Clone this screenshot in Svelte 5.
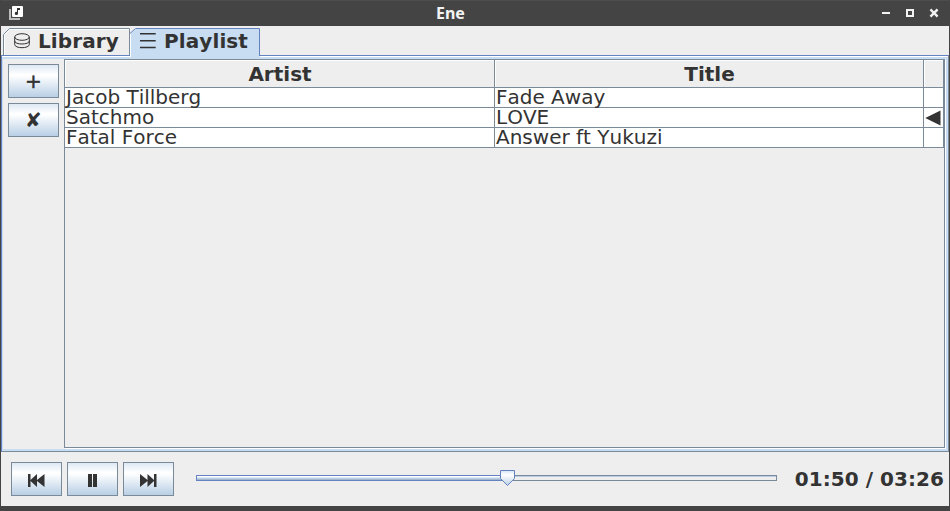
<script>
  const songs = [
    { artist: 'Jacob Tillberg', title: 'Fade Away' },
    { artist: 'Satchmo', title: 'LOVE' },
    { artist: 'Fatal Force', title: 'Answer ft Yukuzi' }
  ];
  let current = $state(1);
</script>

<div class="window">
  <header class="titlebar">
    <svg class="app-icon" width="14" height="14" viewBox="0 0 14 14">
      <path d="M1 3V13H11" fill="none" stroke="#bdbdbd" stroke-width="2" />
      <rect x="3" y="0" width="11" height="11" rx="1" fill="#fff" />
      <path d="M8 2H11V4H9V7.5A1.6 1.6 0 1 1 8 6Z" fill="#333" />
    </svg>
    <span class="name">Ene</span>
    <svg class="controls" width="57" height="10" viewBox="0 0 57 10">
      <path d="M0 4H8V6H0Z" fill="#f2f2f2" />
      <rect x="25" y="2" width="6" height="6" fill="none" stroke="#f2f2f2" stroke-width="2" />
      <path d="M49.3 2.3L54.7 7.7M54.7 2.3L49.3 7.7" stroke="#f2f2f2" stroke-width="2.4" stroke-linecap="square" />
    </svg>
  </header>

  <nav class="tabs">
    <div class="tab library">
      <svg class="shape" width="127" height="27" viewBox="0 0 127 27">
        <path d="M.5 27V6.5L6.5 .5H126.5V27" fill="#eee" stroke="#7a8a99" />
        <path d="M1.5 27V7L7 1.5H126" fill="none" stroke="#fff" />
      </svg>
      <svg class="icon" width="17" height="16" viewBox="0 0 17 16">
        <g fill="none" stroke="#333" stroke-width="1">
          <ellipse cx="8" cy="4" rx="7.3" ry="3.3" />
          <path d="M.7 4V11.4C.7 15.8 15.3 15.8 15.3 11.4V4M.7 8C.7 12 15.3 12 15.3 8" />
        </g>
      </svg>
      <span>Library</span>
    </div>
    <div class="tab playlist">
      <svg class="shape" width="130" height="30" viewBox="0 0 130 30">
        <path d="M1 30V5.5L5.5 .5H130V30" fill="#c8ddf2" />
        <path d="M0 5.5L5.5 .5H129.5V28" fill="none" stroke="#6382bf" />
        <path d="M.5 6V28" stroke="#fff" />
      </svg>
      <svg class="icon" width="16" height="16" viewBox="0 0 16 16">
        <path d="M0 .8H15.7M0 7.7H15.7M0 14.6H15.7" stroke="#333" stroke-width="1.5" />
      </svg>
      <span>Playlist</span>
    </div>
  </nav>

  <main class="panel">
    <aside>
      <button class="plus" aria-label="Add">+</button>
      <button aria-label="Remove">✘</button>
    </aside>
    <section class="list">
      <div class="row head">
        <div>Artist</div><div>Title</div><div></div>
      </div>
      {#each songs as song, i}
        <div class="row">
          <div>{song.artist}</div>
          <div>{song.title}</div>
          <div class="mark">
            {#if i === current}
              <svg width="16" height="17" viewBox="0 0 16 17"><path d="M.3 9L15.5 1.5V16.5Z" fill="#333" /></svg>
            {/if}
          </div>
        </div>
      {/each}
    </section>
  </main>

  <footer>
    <button aria-label="Previous">
      <svg width="17" height="16" viewBox="0 -3 17 16"><path d="M0 0H2.5V6L9 0V6L16.5 0V13L9 7V13L2.5 7V13H0Z" fill="#333" /></svg>
    </button>
    <button aria-label="Pause">
      <svg width="9" height="16" viewBox="0 -3 9 16"><path d="M0 0H4V13H0ZM5 0H9V13H5Z" fill="#333" /></svg>
    </button>
    <button aria-label="Next">
      <svg width="17" height="16" viewBox="0 -3 17 16"><path d="M0 0L7.5 6V0L14 6V0H16.5V13H14V7L7.5 13V7L0 13Z" fill="#333" /></svg>
    </button>
    <svg class="slider" width="581" height="18" viewBox="0 0 581 18">
      <defs>
        <linearGradient id="thumb" x1="0" y1="0" x2="0" y2="1">
          <stop offset="0" stop-color="#d5e4f2" />
          <stop offset=".3" stop-color="#fff" />
          <stop offset="1" stop-color="#b8cfe5" />
        </linearGradient>
      </defs>
      <rect x=".5" y="5.5" width="580" height="5" fill="#eee" stroke="#7a8a99" />
      <path d="M311 6.5H580" stroke="#b8cfe5" />
      <rect x=".5" y="5.5" width="311" height="5" fill="#b8cfe5" stroke="#6382bf" />
      <path d="M1 6.5H311" stroke="#fff" />
      <path d="M1 7.5H311" stroke="#dce9f5" />
      <path d="M1 9.5H311" stroke="#a3b8cc" />
      <path d="M304.5 .5H318.5V8.5L311.5 15.5L304.5 8.5Z" fill="url(#thumb)" stroke="#6382bf" />
    </svg>
    <span class="time">01:50 / 03:26</span>
  </footer>
</div>

<style>
  :global(body) { margin: 0; }
  .window {
    width: 950px;
    height: 511px;
    box-sizing: border-box;
    border: solid #444;
    border-width: 0 1px 5px;
    background: #eee;
    color: #333;
    font: 20px/20px "DejaVu Sans", sans-serif;
    font-kerning: none;
    font-variant-ligatures: none;
    display: flex;
    flex-direction: column;
    overflow: hidden;
  }
  .titlebar {
    height: 26px;
    margin: 0 -1px;
    box-sizing: border-box;
    flex: none;
    display: grid;
    grid-template-columns: 427px auto 1fr;
    align-items: center;
    padding: 0 11px 1px 9px;
    background: #444;
    border-top: 1px solid #4d4d4d;
    color: #f2f2f2;
  }
  .name { font: bold 16px/22px "Noto Sans", sans-serif; }
  .controls { justify-self: end; }
  .tabs {
    height: 29px;
    flex: none;
    display: flex;
    padding: 2px 0 0 2px;
    box-sizing: border-box;
  }
  .tab {
    position: relative;
    display: flex;
    align-items: center;
    height: 26px;
    box-sizing: border-box;
    font-weight: bold;
    letter-spacing: .1px;
    z-index: 1;
  }
  .tab .shape { position: absolute; left: 0; top: 0; z-index: -1; }
  .library { width: 127px; padding-left: 11px; gap: 7px; }
  .playlist { width: 130px; padding-left: 10px; gap: 8px; }
  .panel {
    height: 397px;
    flex: none;
    box-sizing: border-box;
    display: flex;
    border: 1px solid #6382bf;
    border-color: #6382bf #7a8a99 #7a8a99 #6382bf;
    box-shadow: inset 0 1px #fff, inset 0 0 0 1px #c8ddf2, inset 0 3px #c8ddf2, inset -2px -2px #c8ddf2;
    padding: 3px 3px 3px 6px;
  }
  aside {
    width: 56px;
    padding-top: 5px;
    display: flex;
    flex-direction: column;
    gap: 5px;
  }
  button {
    width: 51px;
    height: 34px;
    flex: none;
    box-sizing: border-box;
    padding: 0;
    display: flex;
    align-items: center;
    justify-content: center;
    border: 1px solid #7a8a99;
    background: linear-gradient(#dde8f3, #fff 30%, #fff 33%, #b8cfe5);
    color: #333;
    font: bold 20px/20px "DejaVu Sans", sans-serif;
  }
  .plus { font-weight: normal; -webkit-text-stroke: .5px #333; }
  .list {
    width: 881px;
    height: 389px;
    box-sizing: border-box;
    border: 1px solid #7a8a99;
    box-shadow: 1px 1px #fff;
  }
  .row {
    display: grid;
    grid-template-columns: 430px 429px 20px;
    grid-template-rows: 100%;
    height: 20px;
    background: #fff;
  }
  .row > div {
    box-sizing: border-box;
    border-right: 1px solid #7a8a99;
    border-bottom: 1px solid #7a8a99;
    padding-left: 1px;
    line-height: 19px;
    white-space: nowrap;
  }
  .row.head { height: 28px; font-weight: bold; text-align: center; }
  .row.head > div {
    background: #eee;
    box-shadow: inset 1px 1px #fff;
    line-height: 28px;
    padding-left: 1px;
  }
  .row > .mark { display: flex; align-items: center; }
  footer {
    flex: 1;
    display: flex;
    align-items: center;
    gap: 5px;
    padding: 0 5px 0 10px;
  }
  .slider { margin-left: 17px; }
  .time { margin-left: auto; font-weight: bold; letter-spacing: .05px; white-space: nowrap; }
</style>
